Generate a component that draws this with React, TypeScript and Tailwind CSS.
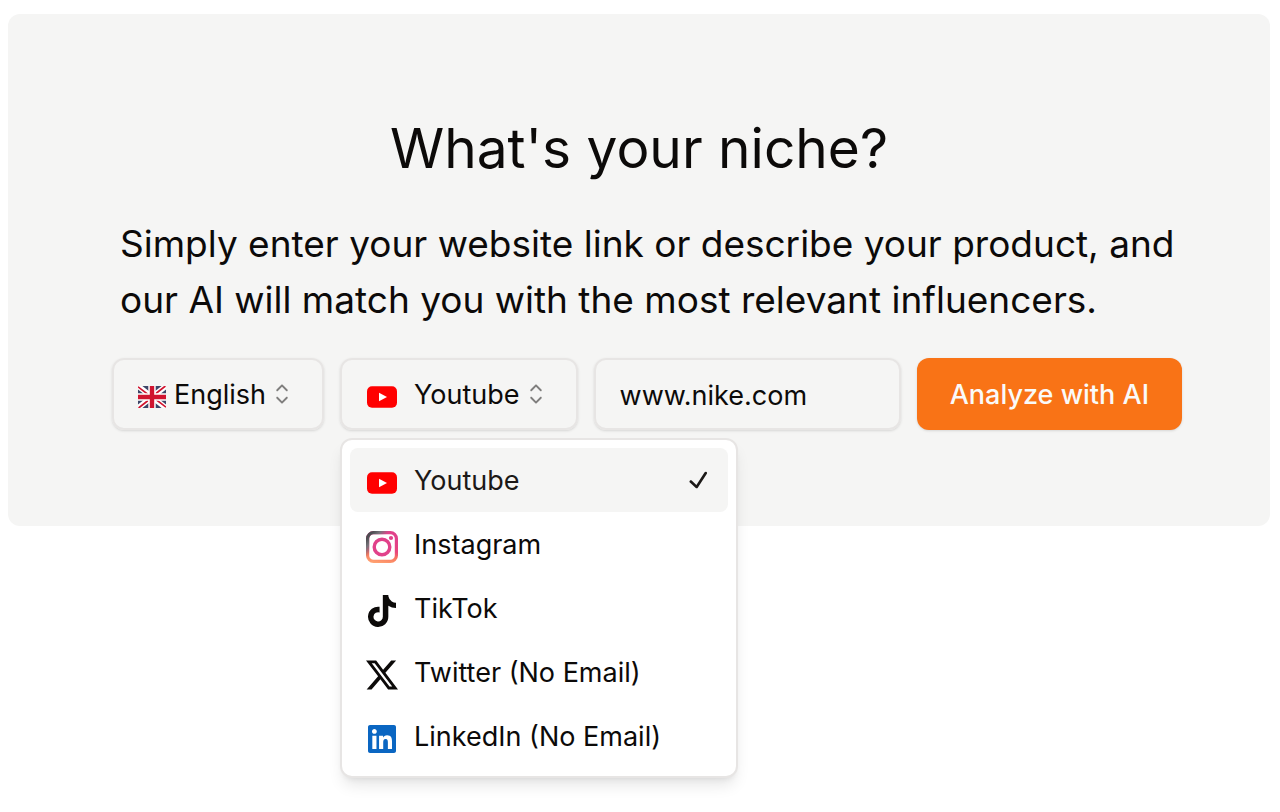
import { useState } from "react";
import type { ReactNode } from "react";
import { FaLinkedin, FaTiktok } from "react-icons/fa6";

function UkFlag() {
  return (
    <svg viewBox="0 0 28 22" className="h-[22px] w-7 shrink-0" aria-hidden="true">
      <rect width="28" height="22" fill="#3d4668" />
      <path d="M0 0 28 22M28 0 0 22" stroke="#fff" strokeWidth="5.4" />
      <path d="M0 .8 12 10M28 21.2 16 12M27.4 0 16 9M.6 22 12 13" stroke="#d0142f" strokeWidth="1.7" />
      <path d="M14 0v22M0 11h28" stroke="#fff" strokeWidth="7.4" />
      <path d="M14 0v22M0 11h28" stroke="#d0142f" strokeWidth="4.4" />
    </svg>
  );
}

function CaretSort() {
  return (
    <svg viewBox="0 0 15 15" className="pointer-events-none size-8 shrink-0 opacity-50" fill="currentColor" aria-hidden="true">
      <path
        fillRule="evenodd"
        clipRule="evenodd"
        d="M4.93179 5.43179C4.75605 5.60753 4.75605 5.89245 4.93179 6.06819C5.10753 6.24392 5.39245 6.24392 5.56819 6.06819L7.49999 4.13638L9.43179 6.06819C9.60753 6.24392 9.89245 6.24392 10.0682 6.06819C10.2439 5.89245 10.2439 5.60753 10.0682 5.43179L7.81819 3.18179C7.73379 3.0974 7.61933 3.04999 7.49999 3.04999C7.38064 3.04999 7.26618 3.0974 7.18179 3.18179L4.93179 5.43179ZM10.0682 9.56819C10.2439 9.39245 10.2439 9.10753 10.0682 8.93179C9.89245 8.75606 9.60753 8.75606 9.43179 8.93179L7.49999 10.8636L5.56819 8.93179C5.39245 8.75606 5.10753 8.75606 4.93179 8.93179C4.75605 9.10753 4.75605 9.39245 4.93179 9.56819L7.18179 11.8182C7.35753 11.9939 7.64245 11.9939 7.81819 11.8182L10.0682 9.56819Z"
      />
    </svg>
  );
}

function Check() {
  return (
    <svg viewBox="0 0 15 15" className="size-8 shrink-0" fill="currentColor" aria-hidden="true">
      <path
        fillRule="evenodd"
        clipRule="evenodd"
        d="M11.4669 3.72684C11.7558 3.91574 11.8369 4.30308 11.648 4.59198L7.39799 11.092C7.29783 11.2452 7.13556 11.3467 6.95402 11.3699C6.77247 11.3931 6.58989 11.3355 6.45446 11.2124L3.70446 8.71241C3.44905 8.48022 3.43023 8.08494 3.66242 7.82953C3.89461 7.57412 4.28989 7.55529 4.5453 7.78749L6.75292 9.79441L10.6018 3.90792C10.7907 3.61902 11.178 3.53795 11.4669 3.72684Z"
      />
    </svg>
  );
}

function YoutubeLogo() {
  return (
    <svg viewBox="0 0 32 32" className="size-8" aria-hidden="true">
      <rect x="1" y="5.3" width="30" height="21.4" rx="5" fill="#ff0000" />
      <path d="M13 11.8v8.4l8-4.2z" fill="#fff" />
    </svg>
  );
}

function InstagramLogo() {
  return (
    <svg viewBox="0 0 32 32" className="size-8" fill="none" aria-hidden="true">
      <defs>
        <linearGradient id="ig-pink" x1="18" y1="8" x2="14" y2="32" gradientUnits="userSpaceOnUse">
          <stop offset="0" stopColor="#e1418a" />
          <stop offset=".45" stopColor="#e8457c" />
          <stop offset=".7" stopColor="#f8765f" />
          <stop offset="1" stopColor="#ffa070" />
        </linearGradient>
        <linearGradient id="ig-gray" x1="4" y1="4" x2="13" y2="12" gradientUnits="userSpaceOnUse">
          <stop offset="0" stopColor="#4d4d52" />
          <stop offset=".45" stopColor="#77747a" />
          <stop offset="1" stopColor="#77747a" stopOpacity="0" />
        </linearGradient>
      </defs>
      <rect x="1.6" y="1.6" width="28.8" height="28.8" rx="6" stroke="url(#ig-pink)" strokeWidth="3.2" />
      <rect x="1.6" y="1.6" width="28.8" height="28.8" rx="6" stroke="url(#ig-gray)" strokeWidth="3.2" />
      <circle cx="16" cy="16" r="7.8" stroke="#e1418a" strokeWidth="3.4" />
      <circle cx="25" cy="7" r="2.1" fill="#e1418a" />
    </svg>
  );
}

function XLogo() {
  return (
    <svg viewBox="0 0 24 24" className="size-8" fill="currentColor" aria-hidden="true">
      <path d="M18.901 1.153h3.68l-8.04 9.19L24 22.846h-7.406l-5.8-7.584-6.638 7.584H.474l8.6-9.83L0 1.154h7.594l5.243 6.932ZM17.61 20.644h2.039L6.486 3.24H4.298Z" />
    </svg>
  );
}

const platforms: { name: string; icon: ReactNode }[] = [
  { name: "Youtube", icon: <YoutubeLogo /> },
  { name: "Instagram", icon: <InstagramLogo /> },
  { name: "TikTok", icon: <FaTiktok className="h-8 w-7" /> },
  { name: "Twitter (No Email)", icon: <XLogo /> },
  { name: "LinkedIn (No Email)", icon: <FaLinkedin className="h-8 w-7 text-[#0a66c2]" /> },
];

function PlatformLabel({ index }: { index: number }) {
  return (
    <span className="flex items-center gap-4 pt-0.5">
      <span className="flex size-8 shrink-0 translate-y-0.5 items-center justify-center">{platforms[index].icon}</span>
      <span className="whitespace-nowrap">{platforms[index].name}</span>
    </span>
  );
}

function PlatformPicker() {
  const [open, setOpen] = useState(true);
  const [selected, setSelected] = useState(0);

  return (
    <div className="relative">
      <button
        type="button"
        aria-haspopup="listbox"
        aria-expanded={open}
        aria-controls="platform-list"
        onClick={() => setOpen(!open)}
        className="flex h-18 items-center rounded-xl border-2 border-[#e7e5e4] px-6 shadow-sm"
      >
        <PlatformLabel index={selected} />
        <CaretSort />
      </button>
      {open && (
        <ul
          id="platform-list"
          role="listbox"
          aria-label="Platform"
          className="absolute top-full left-0 z-10 mt-2 w-[398px] rounded-xl border-2 border-[#e7e5e4] bg-white p-2 shadow-lg"
        >
          {platforms.map((platform, index) => (
            <li
              key={platform.name}
              role="option"
              aria-selected={index === selected}
              onClick={() => {
                setSelected(index);
                setOpen(false);
              }}
              className="flex h-16 cursor-default items-center justify-between rounded-lg pr-3.5 pl-4 aria-selected:bg-[#f5f5f4] aria-selected:text-[#1c1917]"
            >
              <PlatformLabel index={index} />
              {index === selected && <Check />}
            </li>
          ))}
        </ul>
      )}
    </div>
  );
}

export default function App() {
  return (
    <main className="min-h-screen bg-white pt-3.5 pr-2.5 pl-2 font-['Inter','Liberation_Sans',sans-serif] text-[27px] leading-10 text-[#0c0a09]">
      <section className="rounded-xl bg-[#f5f5f4] pt-24 pr-22 pb-24 pl-26">
        <h1 className="pr-4 text-center text-[55px] leading-[76px]">What's your niche?</h1>
        <p className="mt-[30px] pl-2 text-[37px] leading-14">
          Simply enter your website link or describe your product, and our AI will match you with the most relevant
          influencers.
        </p>
        <form className="mt-[30px] flex gap-4" onSubmit={(event) => event.preventDefault()}>
          <div className="flex h-18 items-center rounded-xl border-2 border-[#e7e5e4] px-6 shadow-sm">
            <span className="flex items-center gap-2 pt-0.5">
              <span className="translate-y-0.5">
                <UkFlag />
              </span>
              <select aria-label="Language" className="field-sizing-content appearance-none bg-transparent">
                <option>English</option>
              </select>
            </span>
            <CaretSort />
          </div>
          <PlatformPicker />
          <input
            type="text"
            aria-label="Website or product"
            defaultValue="www.nike.com"
            className="h-18 min-w-0 flex-1 rounded-xl border-2 border-[#e7e5e4] bg-transparent px-6 pt-0.5 shadow-sm"
          />
          <button
            type="submit"
            className="h-18 rounded-xl bg-[#f97316] px-[33px] pt-0.5 font-medium whitespace-nowrap text-[#fafaf9] shadow-sm"
          >
            Analyze with AI
          </button>
        </form>
      </section>
    </main>
  );
}
